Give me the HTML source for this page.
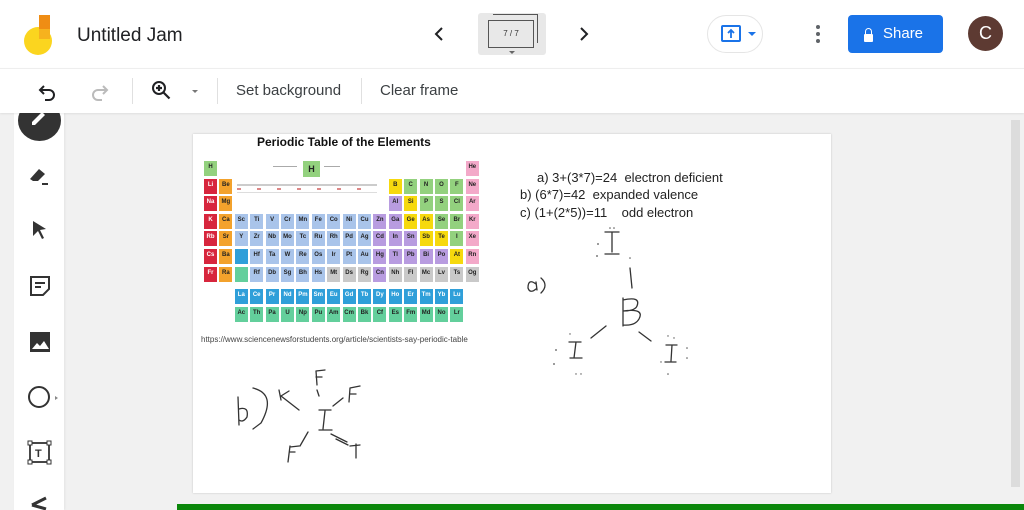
<!DOCTYPE html>
<html><head><meta charset="utf-8">
<style>
*{margin:0;padding:0;box-sizing:border-box}
body{width:1024px;height:510px;overflow:hidden;background:#f1f1f1;font-family:"Liberation Sans",Arial,sans-serif;position:relative}
.abs{position:absolute}
#hdr{left:0;top:0;width:1024px;height:68px;background:#fff}
#tb{left:0;top:68px;width:1024px;height:45px;background:#fff;border-top:1px solid #eee;box-shadow:0 1px 2px rgba(0,0,0,.08)}
.t{font-size:15px;color:#3c4043}
.sep{width:1px;height:26px;background:#e0e0e0;top:78px}
#side{left:14px;top:113px;width:50px;height:397px;background:#fff;box-shadow:1px 0 2px rgba(0,0,0,.06)}
#frame{left:193px;top:134px;width:638px;height:359px;background:#fff;box-shadow:0 0 2px rgba(0,0,0,.2)}
.c{position:absolute;width:15px;height:17px;font-size:6px;font-weight:bold;color:#222;text-align:center;line-height:12px;border:0.5px solid #fff}
</style></head><body>
<div id="side" class="abs"></div>
<div class="abs" style="left:18px;top:100px;width:43px;height:41px;border-radius:50%;background:#333"></div>
<svg class="abs" style="left:29px;top:108px" width="22" height="18"><path d="M3 14l10-10 3 3-10 10H3z" fill="#fff"/></svg>
<svg class="abs" style="left:28px;top:164px" width="24" height="22"><path d="M2 15l9-10 6 5-7 7H5z" fill="#333"/><path d="M14 20h6" stroke="#333" stroke-width="2"/></svg>
<svg class="abs" style="left:31px;top:219px" width="18" height="22"><path d="M2 2l13 8-6 1 4 8-2 1-4-8-5 5z" fill="#333"/></svg>
<svg class="abs" style="left:28px;top:274px" width="24" height="24"><path d="M3 3h18v12l-6 6H3z" fill="none" stroke="#333" stroke-width="2"/><path d="M7 9h10M7 13h6" stroke="#333" stroke-width="2"/></svg>
<svg class="abs" style="left:28px;top:330px" width="24" height="24"><rect x="2" y="2" width="20" height="20" fill="#333"/><path d="M4 19l5-6 3 3 4-5 5 8z" fill="#fff"/></svg>
<svg class="abs" style="left:27px;top:385px" width="34" height="26"><circle cx="12" cy="12" r="10" fill="none" stroke="#333" stroke-width="2"/><path d="M28 11l3 2-3 2z" fill="#888"/></svg>
<svg class="abs" style="left:27px;top:440px" width="26" height="26"><rect x="3" y="3" width="19" height="19" fill="none" stroke="#333" stroke-width="1.8"/><rect x="1" y="1" width="4" height="4" fill="#fff" stroke="#333"/><rect x="20" y="1" width="4" height="4" fill="#fff" stroke="#333"/><rect x="1" y="20" width="4" height="4" fill="#fff" stroke="#333"/><rect x="20" y="20" width="4" height="4" fill="#fff" stroke="#333"/><text x="8" y="17" font-size="11" font-weight="bold" font-family="Liberation Sans" fill="#333">T</text></svg>
<svg class="abs" style="left:30px;top:495px" width="20" height="15"><path d="M2 10l14-7M2 10l14 4" stroke="#333" stroke-width="3"/></svg>

<div id="hdr" class="abs"></div>
<div class="abs" style="left:24px;top:27px;width:28px;height:28px;border-radius:50%;background:#fbd51f"></div>
<div class="abs" style="left:39px;top:15px;width:11px;height:14px;background:#ef8d14"></div>
<div class="abs" style="left:39px;top:29px;width:11px;height:10px;background:#f6b21e"></div>
<div class="abs" style="left:77px;top:25px;font-size:19px;color:#202124">Untitled Jam</div>
<svg class="abs" style="left:433px;top:26px" width="12" height="16"><path d="M9 2L3 8l6 6" stroke="#202124" stroke-width="2" fill="none"/></svg>
<div class="abs" style="left:478px;top:13px;width:68px;height:42px;background:#e8e8e8;border-radius:3px"></div>
<div class="abs" style="left:493px;top:14px;width:45px;height:29px;border:1.5px solid #555;border-left:none;border-bottom:none"></div>
<div class="abs" style="left:488px;top:20px;width:46px;height:28px;border:1.5px solid #555;background:#e8e8e8;font-size:8px;text-align:center;line-height:25px;color:#333">7 / 7</div>
<div class="abs" style="left:509px;top:51px;width:0;height:0;border-left:3px solid transparent;border-right:3px solid transparent;border-top:3px solid #666"></div>
<svg class="abs" style="left:578px;top:26px" width="12" height="16"><path d="M3 2l6 6-6 6" stroke="#202124" stroke-width="2" fill="none"/></svg>
<div class="abs" style="left:707px;top:15px;width:56px;height:38px;border:1px solid #e5e5e5;border-radius:19px"></div>
<div class="abs" style="left:721px;top:25px;width:20px;height:17px;border:2px solid #1a73e8;border-radius:2px"></div>
<svg class="abs" style="left:726px;top:28px" width="10" height="11"><path d="M5 10V2M2 5l3-3 3 3" stroke="#1a73e8" stroke-width="1.8" fill="none"/></svg>
<div class="abs" style="left:748px;top:32px;border-left:4px solid transparent;border-right:4px solid transparent;border-top:4px solid #1a73e8"></div>
<div class="abs" style="left:816px;top:25px;width:4px;height:4px;border-radius:2px;background:#5f6368;box-shadow:0 7px 0 #5f6368,0 14px 0 #5f6368"></div>
<div class="abs" style="left:848px;top:15px;width:95px;height:38px;background:#1a73e8;border-radius:4px;color:#fff;font-size:15px;line-height:38px"><span style="position:absolute;left:16px;top:19px;width:9px;height:8px;background:#fff;border-radius:1px"></span><span style="position:absolute;left:17px;top:13px;width:7px;height:7px;border:1.5px solid #fff;border-bottom:none;border-radius:4px 4px 0 0"></span><span style="position:absolute;left:35px">Share</span></div>
<div class="abs" style="left:968px;top:16px;width:35px;height:35px;border-radius:50%;background:#5d3a32;color:#fff;font-size:18px;text-align:center;line-height:35px">C</div>

<div id="tb" class="abs"></div>
<svg class="abs" style="left:38px;top:82px" width="20" height="20"><path d="M6 4L2 8l4 4M2 8h9a5 5 0 0 1 0 10H7" stroke="#202124" stroke-width="2" fill="none"/></svg>
<svg class="abs" style="left:89px;top:82px" width="20" height="20"><path d="M14 4l4 4-4 4M18 8H9a5 5 0 0 0 0 10h4" stroke="#bbb" stroke-width="2" fill="none"/></svg>
<div class="abs sep" style="left:132px"></div>
<svg class="abs" style="left:151px;top:80px" width="22" height="22"><circle cx="8" cy="8" r="6" stroke="#202124" stroke-width="2" fill="none"/><path d="M12.5 12.5l6 6M5 8h6M8 5v6" stroke="#202124" stroke-width="2.2"/></svg>
<div class="abs" style="left:192px;top:90px;border-left:3px solid transparent;border-right:3px solid transparent;border-top:3px solid #777"></div>
<div class="abs sep" style="left:217px"></div>
<div class="abs t" style="left:236px;top:82px">Set background</div>
<div class="abs sep" style="left:361px"></div>
<div class="abs t" style="left:380px;top:82px">Clear frame</div>

<div class="abs" style="left:1011px;top:120px;width:9px;height:367px;background:#dcdcdc"></div>
<div id="frame" class="abs">
<div class="abs" style="left:64px;top:1px;font-size:12px;font-weight:bold;color:#111">Periodic Table of the Elements</div>
<div id="pt"></div>
<div class="abs" style="left:8px;top:201px;font-size:8px;color:#444">https://www.sciencenewsforstudents.org/article/scientists-say-periodic-table</div>
<div class="abs" style="left:344px;top:35px;font-size:13px;color:#222;line-height:17.5px;white-space:pre">a) 3+(3*7)=24  electron deficient</div>
<div class="abs" style="left:327px;top:52px;font-size:13px;color:#222;line-height:17.5px;white-space:pre">b) (6*7)=42  expanded valence
c) (1+(2*5))=11    odd electron</div>
<svg class="abs" style="left:0;top:0" width="638" height="359" fill="none" stroke="#333" stroke-width="1.3" stroke-linecap="round">
<path d="M412 98h14M419 98v20M412 120h14M437 134l2 20M343 150q-8-6-8 4q2 6 8 1M343 148l1 8M348 144q8 7 0 15"/>
<path d="M430 164v28M430 166q18-4 14 6q-2 5-14 5q22-3 16 8q-4 7-16 6"/>
<path d="M413 192l-15 12M376 208h12M383 208l-2 16M377 224h12M446 198l12 9M473 211h11M479 211l-1 16M472 228h11"/>
<path d="M45 263l1 28M46 275q10-3 8 8q-4 6-8 3M60 254q24 6 8 35l-8 6M86 256l2 10M88 262l8-5M88 262l18 14M123 237l1 14M123 237l9-1M123 243h6M124 256l2 6M126 276h12M132 277l-2 18M126 296h13M140 272l10-8M157 254l-1 14M157 254l10-2M157 260l6 0M115 298l-8 14M97 312l-2 16M97 313l9-1M97 318h5M138 300l16 8M143 305l12 6M163 310v14M157 312l10-1"/>
</svg>
<svg class="abs" style="left:0;top:0" width="638" height="359" fill="#555"><circle cx="405" cy="110" r="0.9"/><circle cx="404" cy="122" r="0.9"/><circle cx="417" cy="94" r="0.8"/><circle cx="421" cy="94" r="0.8"/><circle cx="437" cy="124" r="0.8"/><circle cx="363" cy="216" r="0.9"/><circle cx="361" cy="230" r="0.9"/><circle cx="377" cy="200" r="0.7"/><circle cx="383" cy="240" r="0.7"/><circle cx="388" cy="240" r="0.7"/><circle cx="475" cy="202" r="0.7"/><circle cx="481" cy="204" r="0.7"/><circle cx="494" cy="214" r="0.8"/><circle cx="494" cy="224" r="0.8"/><circle cx="468" cy="228" r="0.7"/><circle cx="475" cy="240" r="0.8"/></svg>
</div>
<div class="abs" style="left:177px;top:504px;width:847px;height:6px;background:#0a870a"></div>
<script>
var R='#d7263d',O='#f3a22c',B='#a9c4ea',P='#b89ce0',Y='#f6d90e',G='#93d17e',K='#f3a9c9',L='#2f9fd9',A='#63cf9c',Z='#c9c9c9';
var rows=[
[[1,'H',G],[18,'He',K]],
[[1,'Li',R],[2,'Be',O],[13,'B',Y],[14,'C',G],[15,'N',G],[16,'O',G],[17,'F',G],[18,'Ne',K]],
[[1,'Na',R],[2,'Mg',O],[13,'Al',P],[14,'Si',Y],[15,'P',G],[16,'S',G],[17,'Cl',G],[18,'Ar',K]],
'K Ca Sc Ti V Cr Mn Fe Co Ni Cu Zn Ga Ge As Se Br Kr',
'Rb Sr Y Zr Nb Mo Tc Ru Rh Pd Ag Cd In Sn Sb Te I Xe',
'Cs Ba _ Hf Ta W Re Os Ir Pt Au Hg Tl Pb Bi Po At Rn',
'Fr Ra _ Rf Db Sg Bh Hs Mt Ds Rg Cn Nh Fl Mc Lv Ts Og'];
var col4=[R,O,B,B,B,B,B,B,B,B,B,P,P,Y,Y,G,G,K],col5=[R,O,B,B,B,B,B,B,B,B,B,P,P,P,Y,Y,G,K],
col6=[R,O,L,B,B,B,B,B,B,B,B,P,P,P,P,P,Y,K],col7=[R,O,A,B,B,B,B,B,Z,Z,Z,P,Z,Z,Z,Z,Z,Z];
var cc=[null,null,null,col4,col5,col6,col7],h='',ox=10,oy=26,w=15.4,hh=17.6;
h+='<div style="position:absolute;left:44px;top:50px;width:140px;height:2px;background:#ccc"></div><div style="position:absolute;left:44px;top:54px;width:140px;height:2px;background:repeating-linear-gradient(90deg,#d88 0 4px,transparent 4px 20px)"></div><div style="position:absolute;left:44px;top:58px;width:140px;height:1px;background:#ddd"></div>';
rows.forEach(function(r,i){var y=oy+i*hh;
 if(typeof r=='string'){r.split(' ').forEach(function(s,j){h+=cell(ox+j*w,y,s=='_'?'':s,cc[i][j]);});}
 else r.forEach(function(e){h+=cell(ox+(e[0]-1)*w,y,e[1],e[2]);});});
'La Ce Pr Nd Pm Sm Eu Gd Tb Dy Ho Er Tm Yb Lu'.split(' ').forEach(function(s,j){h+=cell(ox+(j+2)*w,oy+128,s,L)});
'Ac Th Pa U Np Pu Am Cm Bk Cf Es Fm Md No Lr'.split(' ').forEach(function(s,j){h+=cell(ox+(j+2)*w,oy+146,s,A)});
h+='<div class="c" style="left:109px;top:26px;width:19px;height:18px;background:'+G+';font-size:9px;line-height:17px">H</div>';
h+='<div style="position:absolute;left:80px;top:32px;width:24px;height:1px;background:#aaa"></div><div style="position:absolute;left:131px;top:32px;width:16px;height:1px;background:#aaa"></div>';
function cell(x,y,s,c){return '<div class="c" style="left:'+x+'px;top:'+y+'px;background:'+c+';color:'+(c==R||c==L?'#fff':'#222')+'">'+s+'</div>';}
document.getElementById('pt').innerHTML=h;
</script>
</body></html>
